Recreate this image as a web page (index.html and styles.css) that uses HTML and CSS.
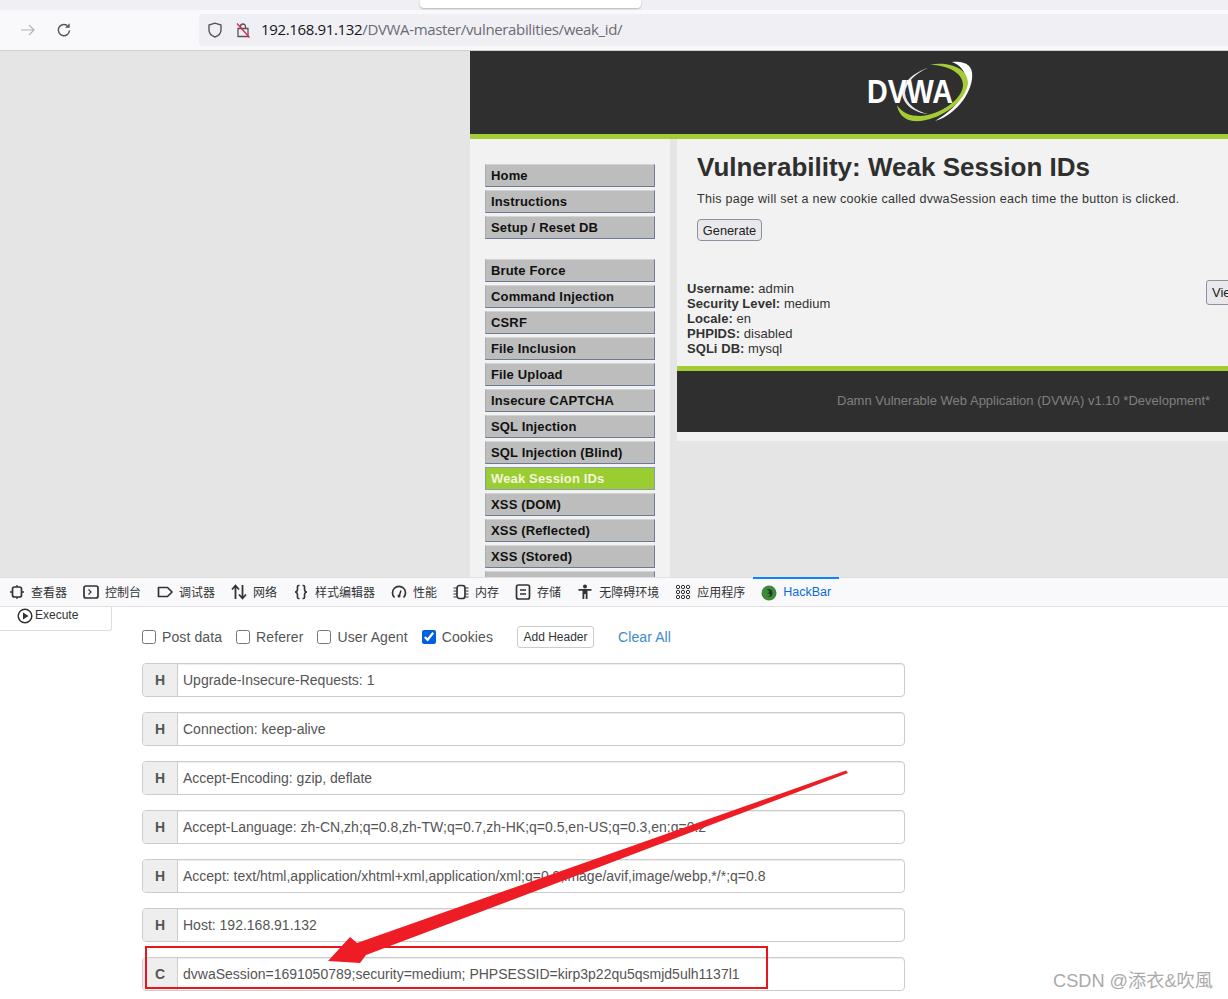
FILE: index.html
```html
<!DOCTYPE html>
<html lang="zh-CN">
<head>
<meta charset="utf-8">
<title>Weak Session IDs</title>
<link rel="stylesheet" href="styles.css">
</head>
<body>
<div class="tabstrip"><div class="tabstub"></div></div>
<header class="navbar">
  <svg class="nav-icon back" viewBox="0 0 16 16"><path d="M1 8h13M9 3l5 5-5 5" fill="none" stroke="#b4b4b8" stroke-width="1.2"/></svg>
  <svg class="nav-icon reload" viewBox="0 0 16 16"><path d="M13.5 8.5A5.6 5.6 0 1 1 11 3.4" fill="none" stroke="#55555a" stroke-width="1.5"/><path d="M13.6 1.2v4.6H9z" fill="#55555a"/></svg>
  <div class="urlbar">
    <svg class="url-icon" viewBox="0 0 16 16"><path d="M8 1.2 2 3v5c0 3.4 2.6 5.8 6 7 3.4-1.2 6-3.600 6-7V3z" fill="none" stroke="#55555a" stroke-width="1.4"/></svg>
    <svg class="url-icon lock" viewBox="0 0 16 16"><path d="M5.500 6.500V4.500a2.500 2.500 0 0 1 5 0v2M3 6.500h10v8H3z" fill="none" stroke="#55555a" stroke-width="1.300"/><path d="M2 1.500 14.500 15.500" stroke="#e22850" stroke-width="1.400"/></svg>
    <span class="url"><span class="url-host">192.168.91.132</span>/DVWA-master/vulnerabilities/weak_id/</span>
  </div>
</header>

<main class="viewport">
  <div class="blank"></div>
  <div class="dvwa">
    <div class="dvwa-header">
      <svg class="logo" viewBox="0 0 120 70">
        <path d="M92 7C105 6 114 10 112 24 109 45 90 62 75 66 92 56 106 42 106 26 106 16 100 10 92 7Z" fill="#fff"/>
        <path d="M70 10C86 6 108 12 108 28 106 48 76 68 53 66 44 65 38 58 37 50 42 58 50 61 60 61 80 60 103 44 103 30 103 18 88 10 70 10Z" fill="#a3cc35"/>
        <path d="M68 13C55 17 43 26 42 38 43 50 55 58 68 59 56 56 46 49 45 38 46 27 56 18 68 13Z" fill="#e8e8e8"/>
        <text class="logo-text" x="7" y="48" textLength="86" lengthAdjust="spacingAndGlyphs">DVWA</text>
      </svg>
    </div>
    <div class="dvwa-body">
      <nav class="menu">
        <div class="menu-group">
          <div class="menu-item">Home</div>
          <div class="menu-item">Instructions</div>
          <div class="menu-item">Setup / Reset DB</div>
        </div>
        <div class="menu-group">
          <div class="menu-item">Brute Force</div>
          <div class="menu-item">Command Injection</div>
          <div class="menu-item">CSRF</div>
          <div class="menu-item">File Inclusion</div>
          <div class="menu-item">File Upload</div>
          <div class="menu-item">Insecure CAPTCHA</div>
          <div class="menu-item">SQL Injection</div>
          <div class="menu-item">SQL Injection (Blind)</div>
          <div class="menu-item active">Weak Session IDs</div>
          <div class="menu-item">XSS (DOM)</div>
          <div class="menu-item">XSS (Reflected)</div>
          <div class="menu-item">XSS (Stored)</div>
          <div class="menu-item"></div>
        </div>
      </nav>
      <div class="content">
        <div class="panel">
          <section class="vuln">
            <h1>Vulnerability: Weak Session IDs</h1>
            <p>This page will set a new cookie called dvwaSession each time the button is clicked.</p>
            <button class="generate" type="button">Generate</button>
          </section>
          <section class="sysinfo">
            <div class="info-lines">
              <div><b>Username:</b> admin</div>
              <div><b>Security Level:</b> medium</div>
              <div><b>Locale:</b> en</div>
              <div><b>PHPIDS:</b> disabled</div>
              <div><b>SQLi DB:</b> mysql</div>
            </div>
            <button class="view" type="button">View</button>
          </section>
          <footer class="dvwa-footer">Damn Vulnerable Web Application (DVWA) v1.10 *Development*</footer>
        </div>
      </div>
    </div>
  </div>
</main>

<nav class="devtools">
  <div class="dt-tab"><svg viewBox="0 0 16 16"><rect x="3.500" y="3" width="9" height="10" rx="2" fill="none" stroke="#333" stroke-width="1.700"/><path d="M1 8h2M13 8h2M8 1v2M8 13v2" stroke="#333" stroke-width="1.300"/></svg><span class="dt-label">查看器</span></div>
  <div class="dt-tab"><svg viewBox="0 0 16 16"><rect x="1" y="2" width="14" height="12" rx="2" fill="none" stroke="#333" stroke-width="1.700"/><path d="M5.500 5.500 8 8l-2.500 2.500" fill="none" stroke="#333" stroke-width="1.200"/></svg><span class="dt-label">控制台</span></div>
  <div class="dt-tab"><svg viewBox="0 0 16 16"><path d="M1.500 3.500h9L15 8l-4.500 4.500h-9z" fill="none" stroke="#333" stroke-width="1.700" stroke-linejoin="round"/></svg><span class="dt-label">调试器</span></div>
  <div class="dt-tab"><svg viewBox="0 0 16 16"><path d="M4.500 15V2M1 5.500l3.500-4 3.500 4M11.500 1v13M8 10.500l3.500 4 3.500-4" fill="none" stroke="#333" stroke-width="1.800"/></svg><span class="dt-label">网络</span></div>
  <div class="dt-tab"><svg viewBox="0 0 16 16"><path d="M6.500 1.500H5.800C4 1.500 4.500 3.500 4.500 5 4.500 6.800 4 8 2 8c2 0 2.500 1.200 2.500 3 0 1.500-.5 3.500 1.300 3.500h.7M9.500 1.500h.7C12 1.500 11.500 3.500 11.500 5c0 1.800.5 3 2.500 3-2 0-2.500 1.200-2.500 3 0 1.500.5 3.500-1.300 3.500h-.7" fill="none" stroke="#333" stroke-width="1.600"/></svg><span class="dt-label">样式编辑器</span></div>
  <div class="dt-tab"><svg viewBox="0 0 16 16"><path d="M3.500 13.500A6.500 6.500 0 1 1 12.500 13.500" fill="none" stroke="#333" stroke-width="1.700"/><path d="M8 12.500 10 6.500" stroke="#333" stroke-width="1.500"/><circle cx="8" cy="12" r="1.500" fill="#333"/></svg><span class="dt-label">性能</span></div>
  <div class="dt-tab"><svg viewBox="0 0 16 16"><rect x="4" y="1.500" width="8" height="13" rx="2.500" fill="none" stroke="#333" stroke-width="1.700"/><path d="M0.500 4h3M0.500 7h3M0.500 10h3M0.500 13h3M12.500 4h3M12.500 7h3M12.500 10h3M12.500 13h3" stroke="#333" stroke-width="1"/></svg><span class="dt-label">内存</span></div>
  <div class="dt-tab"><svg viewBox="0 0 16 16"><rect x="1.500" y="1" width="13" height="14" rx="2" fill="none" stroke="#333" stroke-width="1.700"/><path d="M5 6h6M5 10h6" stroke="#333" stroke-width="1.300"/></svg><span class="dt-label">存储</span></div>
  <div class="dt-tab"><svg viewBox="0 0 16 16"><circle cx="8" cy="2.500" r="2" fill="#333"/><path d="M1.500 5h13v1.800H10.500V15H8.700v-5H7.300v5H5.500V6.800H1.500z" fill="#333"/></svg><span class="dt-label">无障碍环境</span></div>
  <div class="dt-tab"><svg viewBox="0 0 16 16" fill="none" stroke="#333" stroke-width="1"><circle cx="3" cy="3" r="1.700"/><circle cx="8" cy="3" r="1.700"/><circle cx="13" cy="3" r="1.700"/><circle cx="3" cy="8" r="1.700"/><circle cx="8" cy="8" r="1.700"/><circle cx="13" cy="8" r="1.700"/><circle cx="3" cy="13" r="1.700"/><circle cx="8" cy="13" r="1.700"/><circle cx="13" cy="13" r="1.700"/></svg><span class="dt-label">应用程序</span></div>
  <div class="dt-tab dt-active"><svg viewBox="0 0 16 16"><circle cx="8" cy="8" r="7.500" fill="#3f8a3a"/><path d="M5 4.500c3-1.500 6.500 0 6.500 3.500s-3 4.500-5.500 3.500c2 0 3.500-1 3-2.500L6 8.500l2.500-1.500c0-1-2-2.500-3.500-2.500z" fill="#1f3a1c"/></svg><span class="dt-label">HackBar</span></div>
</nav>

<section class="hackbar">
  <div class="side">
    <button class="execute" type="button"><svg viewBox="0 0 16 16"><circle cx="8" cy="8" r="6.800" fill="none" stroke="#333" stroke-width="1.500"/><path d="M6 4.500 11.500 8 6 11.500z" fill="#333"/></svg>Execute</button>
  </div>
  <div class="hb-main">
    <div class="options">
      <label class="opt"><input type="checkbox">Post data</label>
      <label class="opt"><input type="checkbox">Referer</label>
      <label class="opt"><input type="checkbox">User Agent</label>
      <label class="opt"><input type="checkbox" checked>Cookies</label>
      <button class="add-header" type="button">Add Header</button>
      <a class="clear-all">Clear All</a>
    </div>
    <div class="headers">
      <div class="field"><span class="addon">H</span><span class="value">Upgrade-Insecure-Requests: 1</span></div>
      <div class="field"><span class="addon">H</span><span class="value">Connection: keep-alive</span></div>
      <div class="field"><span class="addon">H</span><span class="value">Accept-Encoding: gzip, deflate</span></div>
      <div class="field"><span class="addon">H</span><span class="value">Accept-Language: zh-CN,zh;q=0.8,zh-TW;q=0.7,zh-HK;q=0.5,en-US;q=0.3,en;q=0.2</span></div>
      <div class="field"><span class="addon">H</span><span class="value">Accept: text/html,application/xhtml+xml,application/xml;q=0.9,image/avif,image/webp,*/*;q=0.8</span></div>
      <div class="field"><span class="addon">H</span><span class="value">Host: 192.168.91.132</span></div>
      <div class="field"><span class="addon">C</span><span class="value">dvwaSession=1691050789;security=medium; PHPSESSID=kirp3p22qu5qsmjd5ulh1137l1</span></div>
    </div>
  </div>
</section>

<svg class="annotation" viewBox="0 0 1228 999">
  <rect x="146" y="947" width="621" height="41" fill="none" stroke="#e8151f" stroke-width="2"/>
  <path d="M846 770.500 848 773 366 955 360 963 328 961 350 937 357 943Z" fill="#ee1c25"/>
</svg>
<div class="watermark">CSDN @添衣&amp;吹風</div>
</body>
</html>
```
FILE: styles.css
```css
* { box-sizing: border-box; }
html, body { margin: 0; padding: 0; }
body {
  position: relative;
  width: 1228px;
  height: 999px;
  overflow: hidden;
  background: #fff;
  font-family: "Liberation Sans", Arial, sans-serif;
  color: #333;
}

/* browser chrome */
.tabstrip { height: 10px; background: #f0f0f4; padding-left: 420px; }
.tabstub {
  width: 221px; height: 8px; background: #fff;
  border-radius: 0 0 4px 4px; box-shadow: 0 1px 2px rgba(0,0,0,.25);
}
.navbar {
  height: 41px; background: #f9f9fb; border-bottom: 1px solid #cfcfd8;
  display: flex; align-items: center; padding-left: 20px;
}
.nav-icon { width: 16px; height: 16px; flex: none; }
.reload { margin-left: 20px; }
.urlbar {
  margin-left: 127px; flex: 1; height: 32px; background: #f0f0f4;
  border-radius: 4px 0 0 4px; display: flex; align-items: center; padding-left: 8px;
}
.url-icon { width: 16px; height: 16px; flex: none; }
.lock { margin-left: 12px; }
.url {
  margin: -3px 0 0 10px; font-size: 15px; color: #6b6b74;
  font-family: "Open Sans", "Liberation Sans", sans-serif; letter-spacing: -.35px;
}
.url-host { color: #15141a; }

/* DVWA page */
.viewport { height: 526px; display: flex; overflow: hidden; background: #e5e5e5; }
.blank { width: 470px; flex: none; }
.dvwa { width: 758px; flex: none; overflow: hidden; }
.dvwa-header {
  height: 88px; background: #2f2f2f; border-bottom: 5px solid #a3cc35;
  padding: 4px 0 0 390px;
}
.logo { width: 120px; height: 70px; display: block; }
.logo-text { font: bold 34px "Liberation Sans", Arial, sans-serif; fill: #fff; }
.dvwa-body { display: flex; align-items: flex-start; }
.menu {
  width: 200px; flex: none; height: 450px; background: #f2f2f2;
  padding: 25px 15px 0; display: flex; flex-direction: column; gap: 20px;
}
.menu-group { display: flex; flex-direction: column; gap: 3px; }
.menu-item {
  height: 23px; background: #bdbdbd; padding-left: 5px;
  border: 1px solid; border-color: #d4d4d4 #6d7a94 #6d7a94 #a9adb5;
  font-size: 13px; letter-spacing: .15px; font-weight: bold; line-height: 21px; color: #111; white-space: nowrap;
}
.menu-item.active { background: #9acd32; color: #f5f5dc; border-color: #8a9bb0; }
.content { flex: 1; padding-left: 7px; min-width: 0; }
.panel { width: 560px; height: 302px; background: #f2f2f2; display: flex; flex-direction: column; }
.vuln { padding: 13px 0 0 20px; height: 125px; }
h1 { margin: 0; font-size: 26px; line-height: 30px; color: #2f2f2f; white-space: nowrap; }
.vuln p { margin: 10px 0 0; font-size: 12.500px; line-height: 14px; color: #333; letter-spacing: .27px; white-space: nowrap; }
.generate {
  display: block; margin-top: 13px; width: 65px; height: 22px; padding: 0;
  background: #e9e9ed; border: 1px solid #8f8f9d; border-radius: 4px;
  font: 12.800px "Liberation Sans", Arial, sans-serif; color: #222;
}
.sysinfo { position: relative; height: 102px; padding: 17px 0 0 10px; }
.info-lines { font-size: 13px; letter-spacing: .05px; line-height: 15px; color: #333; }
.view {
  position: absolute; left: 529px; top: 16px; width: 60px; height: 25px;
  background: #e9e9ed; border: 1px solid #8f8f9d; border-radius: 3px;
  font: 13px "Liberation Sans", Arial, sans-serif; text-align: left; padding: 0 0 0 5px; color: #222;
}
.dvwa-footer {
  height: 66px; background: #2f2f2f; border-top: 5px solid #a3cc35;
  font-size: 13px; line-height: 60px; color: #808080; padding-left: 160px; white-space: nowrap;
}

/* devtools */
.devtools {
  height: 30px; background: #f9f9fb; border-top: 1px solid #e0e0e2; border-bottom: 1px solid #e0e0e2;
  display: flex; padding-left: 1px;
}
.dt-tab {
  display: flex; align-items: center; gap: 6px; padding: 0 8px;
  font: 12px "Noto Sans CJK SC", "Liberation Sans", sans-serif; color: #333; white-space: nowrap;
}
.dt-tab svg { width: 16px; height: 16px; flex: none; }
.dt-label { margin-top: -2px; }
.dt-active {
  color: #0a6cdb; border-top: 2px solid #0a84ff; margin-top: -1px;
  font-family: "Liberation Sans", sans-serif; font-size: 12.500px;
}

/* hackbar */
.hackbar { display: flex; align-items: flex-start; }
.side { width: 142px; flex: none; }
.execute {
  width: 112px; height: 24px; background: #fff; border: 1px solid #ddd; border-width: 0 1px 1px 0;
  border-radius: 0 0 3px 0; display: flex; align-items: flex-start; padding: 1px 0 0 17px; gap: 2px;
  font: 12px "Liberation Sans", Arial, sans-serif; color: #333;
}
.execute svg { width: 16px; height: 16px; flex: none; }
.hb-main { width: 763px; padding-top: 19px; }
.options { display: flex; align-items: center; height: 22px; font-size: 14px; letter-spacing: .1px; color: #555; }
.opt { display: flex; align-items: center; margin-right: 14px; white-space: nowrap; }
.opt input { margin: 0 6px 0 0; width: 14px; height: 14px; accent-color: #0060df; }
.add-header {
  margin-left: 10px; width: 77px; height: 22px; padding: 0; background: #fff;
  border: 1px solid #ccc; border-radius: 3px;
  font: 12px "Liberation Sans", Arial, sans-serif; color: #333;
}
.clear-all { margin-left: 24px; color: #428bca; }
.headers { margin-top: 15px; display: flex; flex-direction: column; gap: 15px; }
.field {
  display: flex; height: 34px; border: 1px solid #ccc; border-radius: 4px; overflow: hidden;
  box-shadow: inset 0 1px 1px rgba(0,0,0,.075); font-size: 14px; line-height: 32px; color: #555;
}
.addon {
  width: 35px; flex: none; background: #eee; border-right: 1px solid #ccc;
  text-align: center; font-weight: bold; color: #555;
}
.value { padding-left: 5px; white-space: nowrap; }

/* screenshot annotations, laid over the page */
.annotation { position: absolute; left: 0; top: 0; width: 1228px; height: 999px; pointer-events: none; }
.watermark {
  position: absolute; left: 1053px; top: 966px;
  font: 18.200px "Liberation Sans", "Noto Sans CJK TC", sans-serif; color: #aaa; white-space: nowrap;
}
```
